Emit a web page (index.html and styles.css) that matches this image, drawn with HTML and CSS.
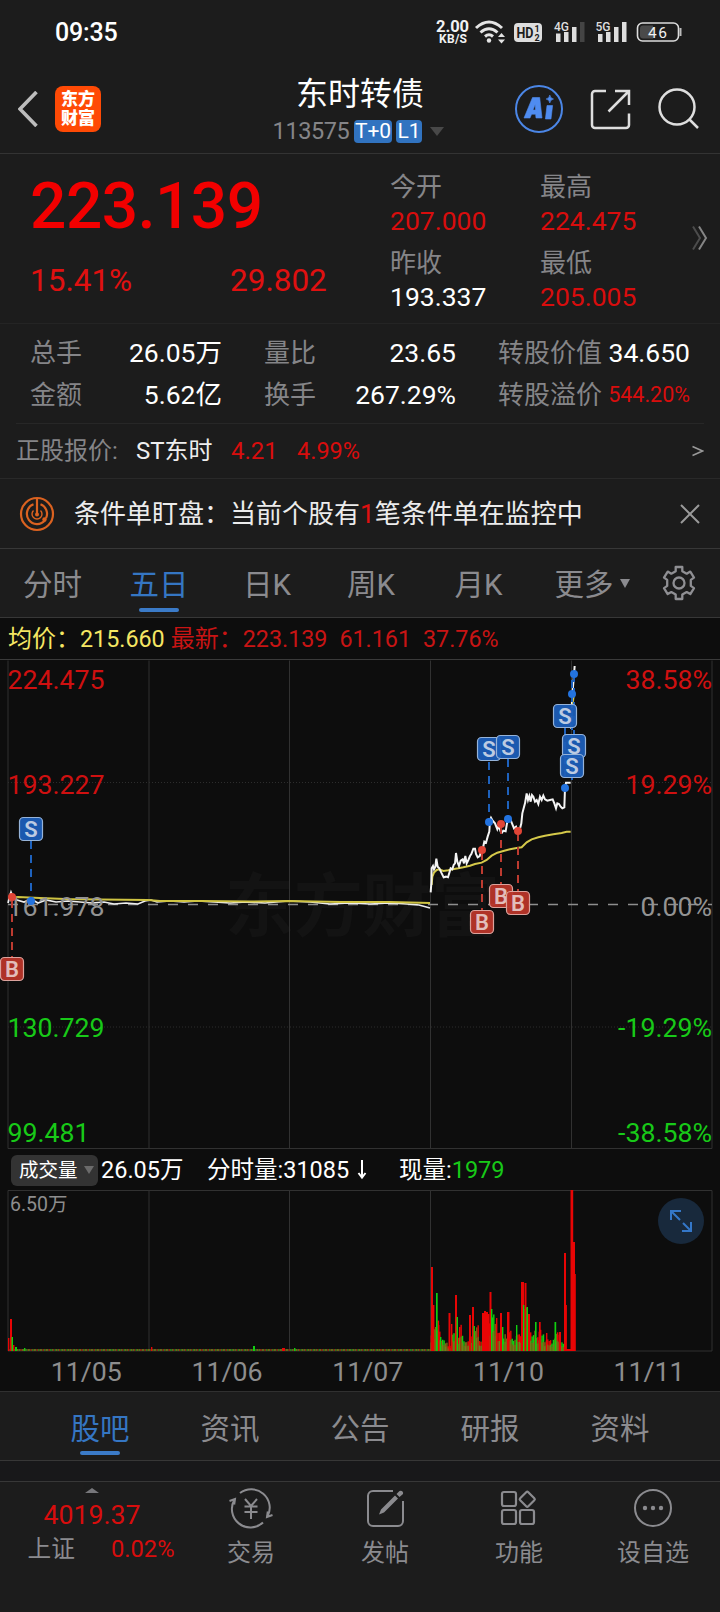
FILE: index.html
```html
<!DOCTYPE html>
<html lang="zh-CN">
<head>
<meta charset="utf-8">
<title>东时转债 113575</title>
<link rel="stylesheet" href="styles.css">
</head>
<body>
<div class="status">
  <span class="clock">09:35</span>
  <svg class="status-icons" width="260" height="64" viewBox="430 0 260 64">
    <g fill="#f2f2f2" font-weight="700">
      <text x="436" y="32" font-size="16.5" textLength="33">2.00</text>
      <text x="439" y="43" font-size="12" textLength="28">KB/S</text>
    </g>
    <g fill="none" stroke="#e4e4e4" stroke-width="3">
      <path d="M476 28Q489 16 502 28M480.500 32.500Q489 25 497.500 32.500M485 36.500Q489 33 493 36.500"/>
    </g>
    <circle cx="489" cy="40.500" r="2.200" fill="#e4e4e4"/>
    <path d="M498 37l3.500-4 3.500 4zM498 39.500l3.500 4 3.500-4z" fill="#e4e4e4"/>
    <rect x="514" y="23" width="28" height="19" rx="4" fill="#dedede"/>
    <g fill="#1c1c1c" font-weight="700"><text x="516.500" y="38" font-size="15" textLength="17" lengthAdjust="spacingAndGlyphs">HD</text><text x="534.500" y="32" font-size="9">1</text><text x="534.500" y="40.500" font-size="9">2</text></g>
    <g fill="#dedede" font-size="12" font-weight="500"><text x="554" y="30.500" textLength="15" lengthAdjust="spacingAndGlyphs">4G</text><text x="595.500" y="30.500" textLength="15" lengthAdjust="spacingAndGlyphs">5G</text></g>
    <g fill="#dedede"><path d="M556 33.500h4.500V42H556zM564 32h4.500v10H564zM572 27h4.500v15H572zM598 34h4.500v8H598zM606 32h4.500v10H606zM614 27h4.500v15H614zM622 22h4.500v20H622z"/><path d="M580 22h4.500v20H580z" fill="#444"/></g>
    <rect x="637.500" y="23" width="41" height="18" rx="5" fill="none" stroke="#dcdcdc" stroke-width="1.600"/>
    <path d="M643 25.500h10v13h-10a3 3 0 0 1-3-3v-7a3 3 0 0 1 3-3z" fill="#4a4a4a"/>
    <path d="M680.500 28v8" stroke="#bbb" stroke-width="2"/>
    <text x="648" y="37.500" font-size="15.500" textLength="19" fill="#f0f0f0">46</text>
  </svg>
</div>

<header class="header">
  <div class="header-left">
    <svg width="20" height="36" viewBox="0 0 20 36" fill="none" stroke="#bdbdbd" stroke-width="3.600"><path d="M18.500 1L2 18l16.500 17"/></svg>
    <div class="logo"><span>东方</span><span>财富</span></div>
  </div>
  <div class="heading">
    <h1>东时转债</h1>
    <div class="code"><span>113575</span><b>T+0</b><b class="l1">L1</b><i class="tri"></i></div>
  </div>
  <div class="header-right">
    <svg width="50" height="50" viewBox="0 0 50 50"><circle cx="25" cy="25" r="23" fill="none" stroke="#4b86e6" stroke-width="2"/><path d="M10 34l8.500-20.500h7.200L28 34h-6l-.4-3.800h-4L16 34zM19 26h2.500l-.4-5.500zM33 21.500h5.600L37 35h-5.600zM35.800 11q.5 3.300 3.700 4-3.200.7-3.700 4-.5-3.300-3.700-4 3.200-.7 3.700-4z" fill="#4f8cf0" stroke="#4f8cf0" stroke-width=".6" stroke-linejoin="round"/></svg>
    <svg width="42" height="42" viewBox="0 0 42 42" fill="none" stroke="#dedede" stroke-width="2.500"><path d="M17 3H6a3 3 0 0 0-3 3v31a3 3 0 0 0 3 3h31a3 3 0 0 0 3-3V25.500M26 3h14v14M40 3L19.500 23.500"/></svg>
    <svg width="44" height="44" viewBox="0 0 44 44" fill="none" stroke="#dedede" stroke-width="2.500"><circle cx="20" cy="20" r="17.500"/><path d="M32 32l9 9"/></svg>
  </div>
</header>

<section class="quote">
  <div class="main">
    <div class="price">223.139</div>
    <div class="change"><span>15.41%</span><span>29.802</span></div>
  </div>
  <div class="pair"><span>今开</span><b class="red">207.000</b><span>昨收</span><b>193.337</b></div>
  <div class="pair"><span>最高</span><b class="red">224.475</b><span>最低</span><b class="red">205.005</b></div>
  <svg class="more" width="18" height="26" viewBox="0 0 18 26" fill="none" stroke-width="2"><path d="M2 1.500l7 11.500-7 11.500" stroke="#4c4c4c"/><path d="M8 1.500l7 11.500-7 11.500" stroke="#858585"/></svg>
</section>

<section class="stats">
  <span>总手</span><b>26.05万</b><span>量比</span><b>23.65</b><span>转股价值</span><b>34.650</b>
  <span>金额</span><b>5.62亿</b><span>换手</span><b>267.29%</b><span>转股溢价</span><b class="small red">544.20%</b>
</section>

<section class="stock">
  <span class="stock-label">正股报价:</span><span class="stock-name">ST东时</span><span class="stock-price">4.21</span><span class="stock-pct">4.99%</span>
  <svg width="12" height="12" viewBox="0 0 12 12" fill="none" stroke="#999" stroke-width="1.500"><path d="M.5 1.500L10.500 6 .5 10.500"/></svg>
</section>

<section class="alert">
  <svg width="36" height="36" viewBox="0 0 36 36" fill="none" stroke="#db6220" stroke-width="2.200"><circle cx="18" cy="18" r="16"/><path d="M14.500 8.300a10.200 10.200 0 1 0 11.500 16M21.500 8.300a10.200 10.200 0 0 1 5.500 14M18 2v16"/><path d="M14.500 14.500a5 5 0 1 0 7 0" stroke-width="1.400"/><circle cx="18" cy="18.500" r="2" fill="#db6220" stroke="none"/><circle cx="25.500" cy="23.500" r="2.200" fill="#db6220" stroke="none"/></svg>
  <p>条件单盯盘：当前个股有<em>1</em>笔条件单在监控中</p>
  <svg width="20" height="20" viewBox="0 0 20 20" stroke="#9a9a9a" stroke-width="2"><path d="M1 1l18 18M19 1L1 19"/></svg>
</section>

<nav class="periods">
  <span>分时</span><span class="on">五日</span><span>日K</span><span>周K</span><span>月K</span><span>更多<i></i></span>
  <svg width="36" height="36" viewBox="0 0 36 36" fill="none" stroke="#8f8f93" stroke-width="2.300" stroke-linejoin="round"><path d="M14.700 2h6.600v4.200l4.400 2.500 3.600-2.100 3.700 6-3.200 2.300v6l3.200 2.200-3.700 6-3.600-2-4.400 2.500V34h-6.600v-4.400l-4.400-2.500-3.600 2-3.700-6 3.200-2.200v-6L3 12.600l3.700-6 3.600 2.100 4.400-2.500z"/><circle cx="18" cy="18" r="5.500"/></svg>
</nav>

<section class="legend">
  <span class="avg">均价：<b>215.660</b></span><span>最新：<b>223.139</b></span><span><b>61.161</b></span><span><b>37.76%</b></span>
</section>

<svg class="price-chart" width="720" height="490" viewBox="0 660 720 490">
  <text class="watermark" x="225" y="931" textLength="275">东方财富</text>
  <path d="M8 660.500v488M149 660.500v488M289.500 660.500v488M430.500 660.500v488M571.500 660.500v488M712 660.500v488M8 1148.500h704" stroke="#313131" fill="none"/>
  <path d="M8 782.500h704M8 1027h704" stroke="#2d2d2d" stroke-dasharray="1 2"/>
  <path d="M8 904.500h704" stroke="#8e8e8e" stroke-width="1.500" stroke-dasharray="10 10"/>
  <polyline fill="none" stroke="#eee" stroke-width="1.700" points="8,903 10,895 11,892 13,897 17,900 24,902 31,899 38,903 46,900 56,902 68,901 80,902 92,903 104,902 114,904 126,903 138,904 145,901 151,900 157,902 170,901 184,902 198,901 214,902 230,903 246,902 265,903 288,901 310,902 330,904 350,903 370,904 390,903 407,904 419,905 430,908"/>
  <polyline fill="none" stroke="#cfc443" stroke-width="2" points="9,898 18,897 40,898 65,899 100,899.500 148,900 160,901 200,901 250,901.500 289,901 340,902 390,902 430,903"/>
  <g transform="translate(410 650) scale(.33333)" fill="none">
    <polyline stroke="#d5c94a" stroke-width="6" points="65,705 67,680 72,668 80,660 88,658 100,663 115,661 128,658 145,655 160,652 180,647 195,642 215,638 230,630 245,617 262,608 280,603 300,598 320,594 335,592 350,577 365,568 385,562 405,557 430,553 455,549 470,545 482,545"/>
    <polyline stroke="#f4f4f4" stroke-width="6" points="62,727 64,700 65,655 69,648 72,658 76,650 79,626 83,650 88,655 94,668 101,682 108,680 114,682 119,665 122,655 127,658 131,645 135,640 138,609 142,635 147,648 152,632 158,628 162,640 166,618 170,640 175,630 180,618 184,612 190,596 195,596 198,612 203,622 209,618 213,605 218,598 223,575 228,578 233,560 238,545 240,510 243,503 248,512 255,520 262,538 266,528 272,545 276,548 280,542 287,544 291,520 295,508 300,506 306,520 312,535 318,530 323,545 329,540 334,520 337,490 341,475 345,460 350,430 354,450 358,438 362,455 366,435 370,440 375,455 380,450 385,462 390,440 395,450 400,437 405,448 412,452 420,450 428,448 433,460 438,475 442,460 447,462 452,470 457,475 463,472 465,414 468,398 482,398"/>
    <polyline stroke="#f4f4f4" stroke-width="6" points="484,237 486,150 489,110 492,75 494,48"/>
    <path d="M492 135L488 163" stroke="#d5c94a" stroke-width="5"/>
  </g>
  <g class="axis">
    <text x="7.500" y="688.500" class="r">224.475</text><text x="7.500" y="793.500" class="r">193.227</text><text x="7.500" y="915.500" class="n">161.978</text><text x="7.500" y="1036.500" class="g">130.729</text><text x="7.500" y="1141.500" class="g">99.481</text>
    <g text-anchor="end"><text x="712" y="688.500" class="r">38.58%</text><text x="712" y="793.500" class="r">19.29%</text><text x="712" y="915.500" class="n">0.00%</text><text x="712" y="1036.500" class="g">-19.29%</text><text x="712" y="1141.500" class="g">-38.58%</text></g>
  </g>
  <g stroke="#1e62bd" stroke-width="2" stroke-dasharray="8 6"><path d="M31 841v58M489 762v58M508 759v58M565 728v58M572 680v100M574 674v60"/></g>
  <g stroke="#bd3b30" stroke-width="2" stroke-dasharray="8 6"><path d="M12 900v58M482 852v58M501 826v58M518 833v58"/></g>
  <g fill="#2373df"><circle cx="31" cy="901" r="4"/><circle cx="489" cy="822" r="4"/><circle cx="508" cy="819" r="4"/><circle cx="565" cy="788" r="4"/><circle cx="572" cy="694" r="4"/><circle cx="574" cy="674" r="4"/></g>
  <g fill="#e14536"><circle cx="12" cy="897" r="4"/><circle cx="482" cy="850" r="4"/><circle cx="501" cy="824" r="4"/><circle cx="518" cy="831" r="4"/></g>
  <g id="marks"></g>
</svg>

<section class="vol-head">
  <span class="pick">成交量<i></i></span><span class="total">26.05万</span><span class="minute">分时量:31085</span>
  <svg width="10" height="20" viewBox="0 0 10 20" fill="none" stroke="#fff" stroke-width="2"><path d="M5 0v17M1.500 13L5 17.500 8.500 13"/></svg>
  <span class="now">现量:<em>1979</em></span>
</section>

<div class="volume">
  <svg width="720" height="162" viewBox="0 1190 720 162">
    <path d="M8 1351V1190.500h704V1351zM149 1190.500V1351M289.500 1190.500V1351M430.500 1190.500V1351M571.500 1190.500V1351" stroke="#313131" fill="none"/>
    <g id="bars"></g>
    <text x="10" y="1211" font-size="19.500" fill="#8d8d8d">6.50万</text>
  </svg>
  <div class="expand"><svg width="24" height="24" viewBox="0 0 24 24" fill="none" stroke="#3477c8" stroke-width="2"><path d="M2 11V2h10M2 2l9 9M13 22h9v-9M22 22l-8-8"/></svg></div>
</div>
<div class="dates"><span>11/05</span><span>11/06</span><span>11/07</span><span>11/10</span><span>11/11</span></div>

<nav class="tabs"><span class="on">股吧</span><span>资讯</span><span>公告</span><span>研报</span><span>资料</span></nav>
<div class="gap"></div>
<footer class="bottom">
  <div class="index"><i></i><b>4019.37</b><div><span>上证</span><em>0.02%</em></div></div>
  <div class="item">
    <svg width="46" height="42" viewBox="0 0 46 42" fill="none" stroke="#8b8b8f" stroke-width="2"><path d="M12 6A18.500 18.500 0 0 1 39.500 29.500M35 35.500A18.500 18.500 0 0 1 6.500 12.500M1.500 14l5.500-2-.8 5.500M44.500 28l-5.500 2 .8-5.500M17 12l6 7 6-7M16.500 19.500h13M16.500 25h13M23 19v13"/></svg>
    <span>交易</span></div>
  <div class="item">
    <svg width="42" height="42" viewBox="0 0 42 42" fill="none" stroke="#8b8b8f" stroke-width="2"><path d="M29 4H9a5 5 0 0 0-5 5v25a5 5 0 0 0 5 5h25a5 5 0 0 0 5-5V14"/><path d="M15 27.500l2-5L31 8.500l3 3L20 25.500zM32.500 7l3-3q2-.5 3 .5t.500 2.500l-3.500 3z" fill="#8b8b8f" stroke="none"/></svg>
    <span>发帖</span></div>
  <div class="item">
    <svg width="42" height="42" viewBox="0 0 42 42" fill="none" stroke="#8b8b8f" stroke-width="2.200"><rect x="4" y="5" width="14" height="14" rx="2"/><rect x="4" y="23" width="14" height="14" rx="2"/><rect x="22" y="23" width="14" height="14" rx="2"/><rect x="23.500" y="6.500" width="11.500" height="11.500" rx="1.500" transform="rotate(45 29.250 12.250)"/></svg>
    <span>功能</span></div>
  <div class="item">
    <svg width="42" height="42" viewBox="0 0 42 42" fill="none" stroke="#8b8b8f" stroke-width="2"><circle cx="21" cy="21" r="18"/><g fill="#8b8b8f" stroke="none"><circle cx="13" cy="21" r="2.200"/><circle cx="21" cy="21" r="2.200"/><circle cx="29" cy="21" r="2.200"/></g></svg>
    <span>设自选</span></div>
</footer>
<script src="chart.js"></script>
</body>
</html>
```

FILE: styles.css
```css
* { box-sizing: border-box; }
body {
  margin: 0;
  width: 720px;
  height: 1612px;
  overflow: hidden;
  background: #1c1c1c;
  color: #fff;
  font-family: Roboto, "Noto Sans CJK SC", sans-serif;
  font-weight: 400;
}
b, em, i, h1, p { font-weight: inherit; font-style: normal; margin: 0; }
svg { display: block; flex: none; }
svg text { font-family: Roboto, "Noto Sans CJK SC", sans-serif; }
.red { color: #d80d0d; }

.status { height: 64px; display: flex; justify-content: space-between; align-items: center; padding: 0 30px 0 55px; }
.clock { padding-top: 2px; font-size: 25px; font-weight: 500; line-height: 64px; letter-spacing: -.2px; }

.header { height: 90px; border-bottom: 1px solid #333; display: grid; grid-template-columns: 270px 180px 1fr; }
.header-left { display: flex; align-items: center; gap: 17px; padding: 0 0 0 18px; }
.logo { width: 46px; height: 46px; border-radius: 8px; background: #ff4a05; font-size: 17px; font-weight: 900; line-height: 19px; display: flex; flex-direction: column; align-items: center; justify-content: center; }
.heading { padding-top: 8px; text-align: center; }
.heading h1 { font-size: 32px; line-height: 44px; }
.code { display: flex; align-items: center; margin-top: 4px; padding-left: 2px; gap: 4px; font-size: 23.500px; line-height: 23px; color: #858588; }
.code span { width: 78px; letter-spacing: -.4px; }
.code b { width: 38px; height: 23px; border-radius: 4px; background: #3173c0; color: #fff; font-size: 21px; line-height: 23px; }
.code .l1 { width: 26px; }
.tri { margin-left: 4px; border: 7px solid transparent; border-top: 9px solid #484848; border-bottom: 0; }
.header-right { display: flex; align-items: center; padding-left: 64px; gap: 25px; }
.header-right svg:last-child { margin-left: 1px; }

.quote { height: 169px; display: grid; grid-template-columns: 390px 150px 151px 1fr; }
.main { padding-left: 30px; }
.price { margin-top: 13px; font-size: 64px; line-height: 80px; font-weight: 500; letter-spacing: -.5px; color: #f20000; }
.change { margin-top: 14px; display: grid; grid-template-columns: 200px 1fr; font-size: 31.500px; line-height: 40px; color: #e01010; }
.pair { padding-top: 16px; display: grid; grid-template-rows: 34px 42px 34px 42px; align-content: start; line-height: 34px; }
.pair span { font-size: 26px; color: #858588; }
.pair b { font-size: 26.500px; }
.more { margin: 71px 0 0; }

.stats { height: 100px; padding: 8px 30px 0; display: grid; grid-template-columns: 80px 112px 120px 114px 152px 82px; grid-template-rows: 42px 42px; line-height: 42px; border-top: 1px solid #242424; }
.stats span { font-size: 26px; color: #858588; white-space: nowrap; }
.stats b { font-size: 26.500px; text-align: right; white-space: nowrap; }
.stats span:nth-of-type(3n+2) { padding-left: 42px; }
.stats span:nth-of-type(3n) { padding-left: 42px; }
.stats .small { font-size: 21.500px; }

.stock { height: 55px; margin: 0 16px; border-top: 1px solid #272727; display: flex; align-items: center; font-size: 24px; line-height: 54px; }
.stock-label { width: 120px; color: #858588; }
.stock-name { width: 95px; color: #eee; }
.stock-price { width: 66px; color: #d80d0d; }
.stock-pct { font-size: 23.500px; color: #d80d0d; }
.stock svg { margin-left: auto; }

.alert { height: 71px; border-top: 1px solid #292929; border-bottom: 1px solid #373737; display: flex; align-items: center; padding: 0 20px 0 19px; }
.alert p { flex: 1; margin-left: 19px; font-size: 26px; line-height: 60px; color: #ececec; }
.alert em { color: #e01010; }

.periods { height: 69px; display: grid; grid-template-columns: 105px 108px 108px 100px 115px 112px 1fr; border-bottom: 1px solid #373737; font-size: 29.500px; line-height: 72px; color: #8b8b8f; }
.periods span { height: 68px; text-align: center; white-space: nowrap; }
.periods .on { display: flex; flex-direction: column; align-items: center; color: #3576c3; }
.periods .on::after, .tabs .on::after { content: ""; width: 40px; height: 4px; border-radius: 2px; background: #3b7bc8; flex: none; }
.periods .on::after { margin-top: -13px; }
.periods i { display: inline-block; margin-left: 6px; vertical-align: 7px; border: 5px solid transparent; border-top: 9px solid #8b8b8f; border-bottom: 0; }
.periods svg { margin: 16px 0 0 13px; }

.legend { height: 42px; background: #0d0d0d; border-bottom: 1px solid #3a3a3a; padding-left: 8px; display: flex; font-size: 24px; line-height: 42px; color: #c81414; white-space: nowrap; }
.legend span { margin-right: 12px; }
.legend b { font-size: 23.300px; }
.legend .avg { color: #f5e663; margin-right: 6px; }
.price-chart { background: #0d0d0d; }
.watermark { font-size: 69px; font-weight: 700; fill: #131313; }
.axis { font-size: 26.700px; }
.axis .r { fill: #cf1010; }
.axis .n { fill: #939393; }
.axis .g { fill: #18c918; }

.vol-head { height: 40px; background: #0d0d0d; display: flex; align-items: center; padding-left: 11px; font-size: 23.500px; line-height: 40px; white-space: nowrap; }
.pick { width: 87px; height: 31px; border-radius: 6px; background: #333; display: flex; align-items: center; padding-left: 8px; font-size: 19.500px; line-height: 31px; }
.pick i { margin-left: 6px; border: 5px solid transparent; border-top: 8px solid #6b6b6b; border-bottom: 0; }
.total { width: 109px; padding-left: 3px; }
.minute { width: 150px; }
.now { margin-left: 32px; }
.now em { color: #18c918; }
.volume { height: 162px; background: #0d0d0d; position: relative; }
.expand { position: absolute; right: 16px; top: 8px; width: 46px; height: 46px; border-radius: 50%; background: #18293c; display: grid; place-items: center; }
.dates { height: 40px; background: #0d0d0d; border-bottom: 1px solid #303030; padding: 0 1px 0 16px; display: grid; grid-template-columns: repeat(5, 140.700px); text-align: center; font-size: 26.700px; line-height: 41px; color: #8d8d8d; }

.tabs { height: 69px; border-bottom: 1px solid #373737; padding: 0 35px; display: grid; grid-template-columns: repeat(5, 130px); font-size: 29.500px; line-height: 74px; color: #8b8b8f; }
.tabs span { height: 68px; text-align: center; }
.tabs .on { display: flex; flex-direction: column; align-items: center; color: #3576c3; }
.tabs .on::after { margin-top: -15px; }
.gap { height: 21px; background: #18181a; border-bottom: 1px solid #373737; }
.bottom { height: 130px; display: grid; grid-template-columns: 184px 134px 134px 134px 134px; color: #8b8b8f; }
.index { display: flex; flex-direction: column; align-items: center; padding-top: 6px; }
.index i { border: 7px solid transparent; border-bottom: 5px solid #77777b; border-top: 0; }
.index b { margin-top: 5px; font-size: 26.700px; line-height: 34px; color: #d80d0d; }
.index div { display: flex; align-items: center; justify-content: space-between; width: 147px; margin-left: 18px; font-size: 23.700px; line-height: 34px; }
.index em { color: #d80d0d; }
.item { display: flex; flex-direction: column; align-items: center; padding-top: 5px; font-size: 24px; line-height: 34px; }
.item span { margin-top: 7px; }
```

FILE: chart.js
```js
const NS = "http://www.w3.org/2000/svg";

function add(parent, tag, attrs, text) {
  const node = document.createElementNS(NS, tag);
  for (const key in attrs) node.setAttribute(key, attrs[key]);
  if (text) node.textContent = text;
  parent.appendChild(node);
}

// Buy and sell badges: letter, centre x, centre y
const marks = [
  ["S", 31, 829], ["B", 12, 969], ["S", 489, 749], ["S", 508, 747],
  ["S", 565, 716], ["S", 574, 746], ["S", 572, 766],
  ["B", 482, 922], ["B", 501, 896], ["B", 518, 903]
];
const markLayer = document.getElementById("marks");
for (const [letter, x, y] of marks) {
  const sell = letter === "S";
  add(markLayer, "rect", {
    x: x - 11.5, y: y - 11.5, width: 23, height: 23, rx: 4,
    fill: sell ? "#1c5eb8" : "#b83529", "fill-opacity": 0.95,
    stroke: sell ? "#96b3d8" : "#dba39d", "stroke-width": 1.2
  });
  add(markLayer, "text", {
    x, y: y + 8, "text-anchor": "middle", "font-size": 22,
    "font-weight": 600, fill: sell ? "#bccbe2" : "#e2bdba"
  }, letter);
}

const barLayer = document.getElementById("bars");
const BASE = 1351;
const RED = "#e80505", GREEN = "#10cf10", OLIVE = "#7d6414";
function bar(x, height, fill, width = 1.4) {
  add(barLayer, "rect", { x, y: BASE - height, width, height, fill });
}

// Quiet sessions
for (let x = 8; x < 430; x += 1.5) {
  bar(x, 2, ["#7a5a14", "#277d1d", "#8d2514", "#4a7420"][Math.floor(x * 7.3) % 4], 1.5);
}
bar(8, 13, RED); bar(10, 32, RED, 2); bar(11.5, 14, GREEN, 1.5); bar(13, 6, RED);
bar(15, 4, GREEN, 2); bar(24, 3, GREEN); bar(151, 4, RED); bar(253, 5, GREEN, 2);
bar(282, 3, RED, 3); bar(294, 3, GREEN);

// Active session: dense bars, then the peaks
const envelope = [25, 28, 22, 30, 14, 12, 8, 7, 6, 18, 20, 17, 28, 15, 12, 11, 14, 18,
  24, 26, 16, 13, 14, 28, 38, 36, 38, 26, 24, 22, 20, 24, 16, 20, 19, 14, 17,
  16, 22, 46, 44, 38, 24, 17, 20, 19, 24, 16, 13, 14, 11, 12, 16, 20, 16, 12, 9];
for (let i = 0; i < 94; i++) {
  const top = envelope[Math.min(56, Math.floor(i * 0.606))];
  const wobble = 0.62 + ((i * 37) % 17) / 38;
  bar(430.6 + i * 1.42, top * wobble, (i * 13) % 7 < 3 ? RED : (i * 13) % 7 < 5 ? OLIVE : GREEN, 1.42);
  bar(430.6 + i * 1.42, top * wobble * 0.55, i % 2 ? OLIVE : "#6f801b", 1.42);
}
// x, height, colour, width
const peaks = [
  [431, 84, RED, 2], [433, 46, RED], [436, 58, GREEN, 1.7], [438, 26, RED], [440, 14, GREEN],
  [448.500, 38, RED, 2], [451, 27, RED], [455, 56, RED, 2], [456.500, 34, GREEN, 1.500],
  [469, 36, RED, 2], [472, 44, RED, 2], [473.500, 25, GREEN], [482, 38, RED, 2],
  [484, 40, RED, 2], [486, 39, RED, 2], [488, 37, RED], [489.500, 59, RED, 2], [491, 42, GREEN],
  [496, 33, RED], [500, 38, RED, 2], [502, 24, GREEN], [507, 39, RED, 2.500],
  [516, 26, GREEN], [521, 69, RED, 3], [523, 46, GREEN, 1.500], [524.500, 68, RED, 2],
  [526.500, 44, GREEN, 1.500], [528, 37, RED, 2], [535, 29, GREEN, 1.600],
  [539, 29, RED, 1.700], [546, 18, RED], [554.500, 29, GREEN, 1.700], [559, 19, RED, 2],
  [564, 98, RED, 2], [565.500, 46, RED], [566, 2, RED, 5], [570.500, 161, RED, 2.700],
  [573, 109, RED, 2], [574.500, 77, RED, 1.300]
];
for (const item of peaks) bar(...item);
```
